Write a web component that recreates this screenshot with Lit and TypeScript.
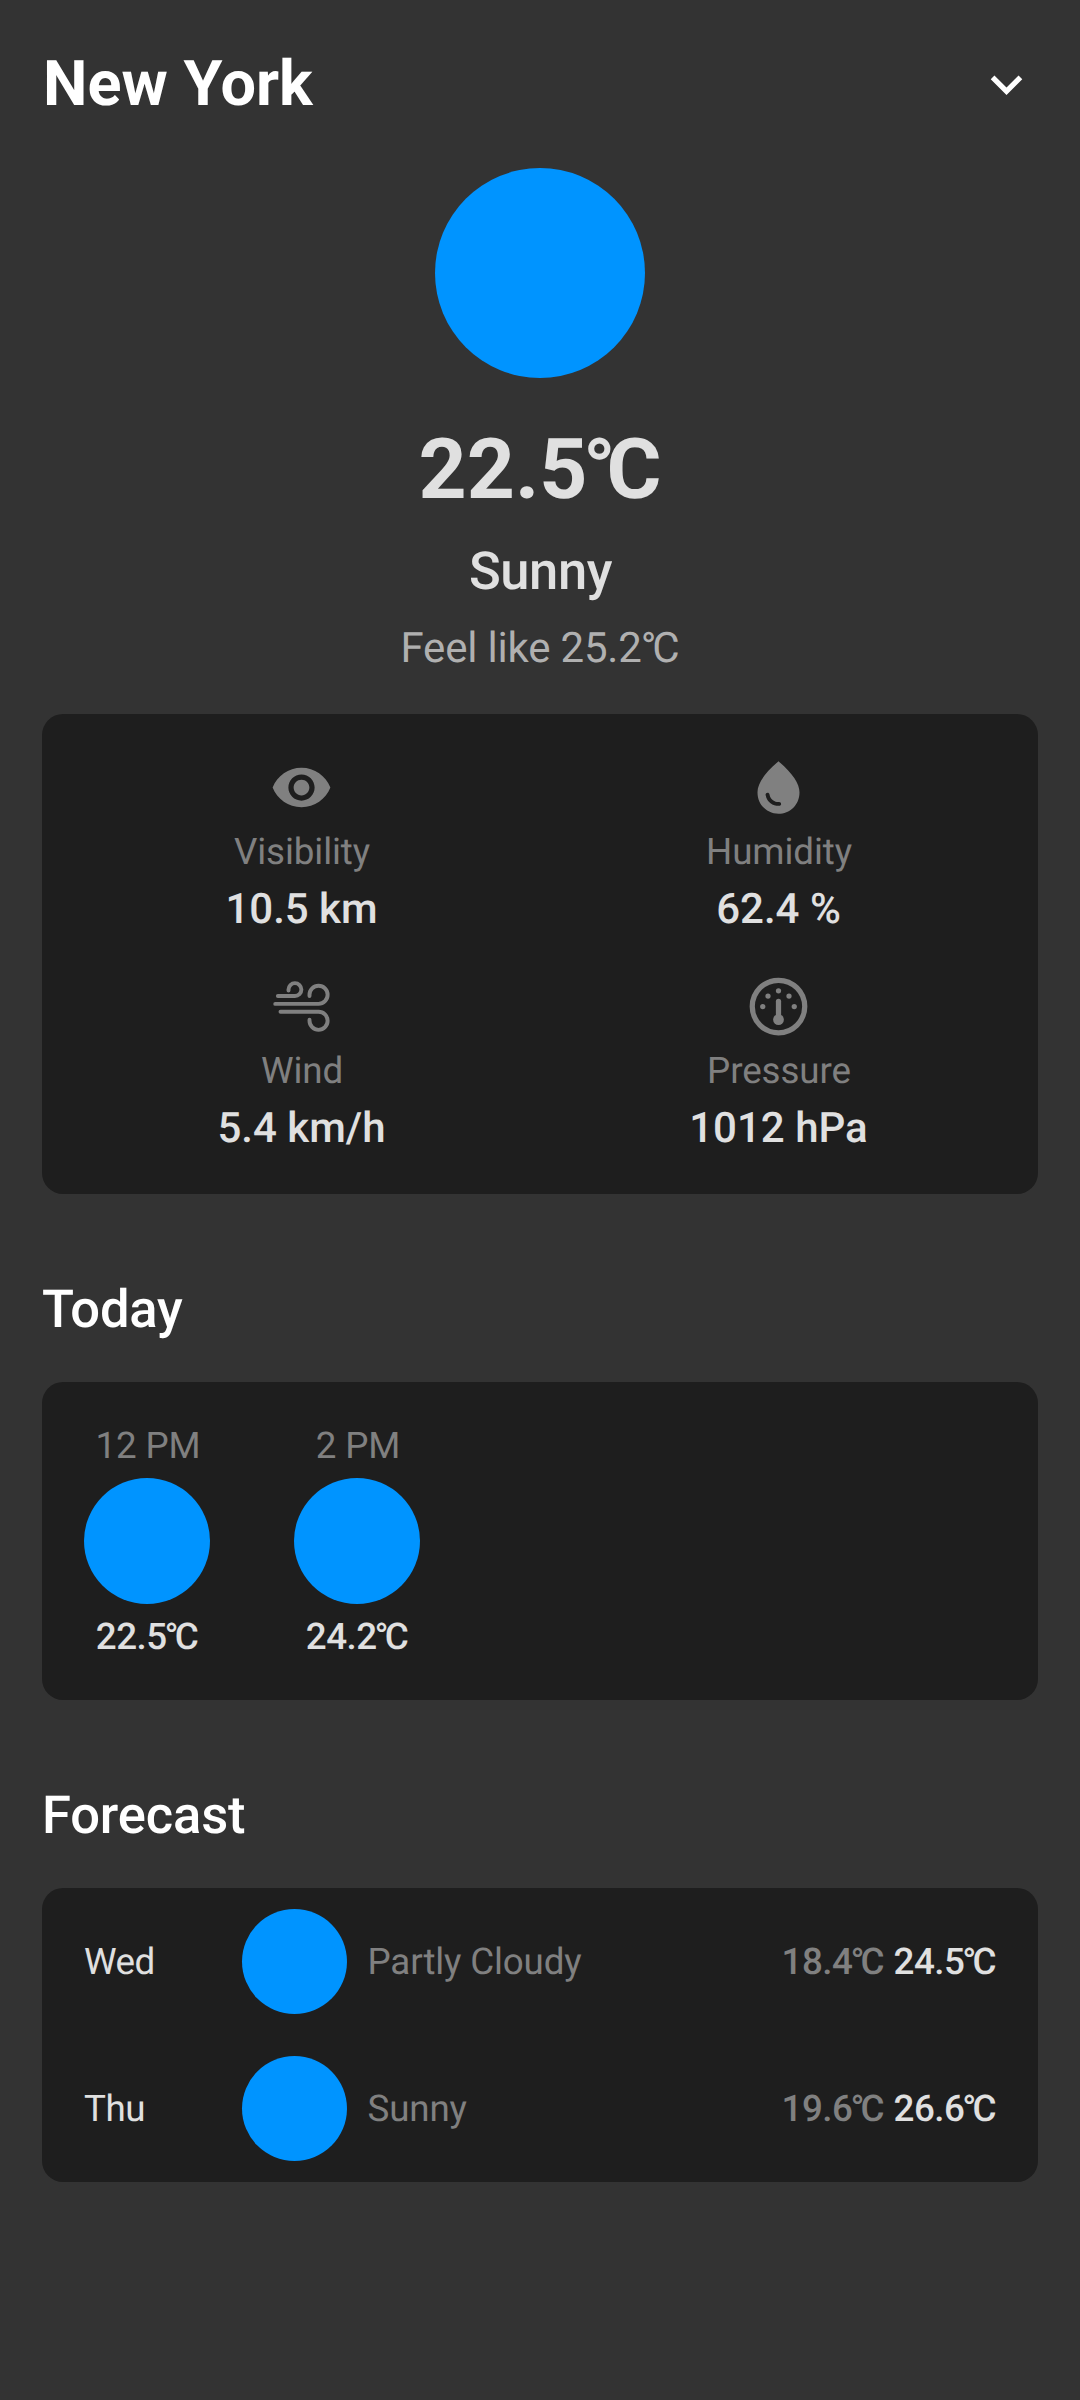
import { LitElement, html, css, svg, SVGTemplateResult } from "lit";
import { customElement, property, state } from "lit/decorators.js";

type IconName = "visibility" | "humidity" | "wind" | "pressure" | "chevron";

interface Metric {
  icon: IconName;
  label: string;
  value: string;
}

interface Hour {
  time: string;
  temp: string;
}

interface Day {
  name: string;
  condition: string;
  low: string;
  high: string;
}

const ICONS: Record<IconName, SVGTemplateResult> = {
  visibility: svg`<path fill="currentColor" d="M12 4.5C7 4.5 2.73 7.61 1 12c1.73 4.39 6 7.5 11 7.5s9.27-3.11 11-7.5c-1.73-4.39-6-7.5-11-7.5zM12 17c-2.76 0-5-2.24-5-5s2.24-5 5-5 5 2.24 5 5-2.24 5-5 5zm0-8c-1.66 0-3 1.34-3 3s1.34 3 3 3 3-1.34 3-3-1.34-3-3-3z"/>`,
  humidity: svg`<path fill="currentColor" fill-rule="evenodd" d="M12 2c-5.33 4.55-8 8.48-8 11.8 0 4.98 3.8 8.2 8 8.2s8-3.22 8-8.2C20 10.48 17.33 6.55 12 2zM7.83 14c.37 0 .67.26.74.62.41 2.22 2.28 2.98 3.64 2.87.43-.02.79.32.79.75 0 .4-.32.73-.72.75-2.13.13-4.62-1.09-5.19-4.12C7.01 14.42 7.37 14 7.83 14z"/>`,
  wind: svg`<g fill="none" stroke="currentColor" stroke-width="1.5" stroke-linecap="round">
    <path d="M3 8H9.5A2.45 2.45 0 1 0 7.05 5.55V5.9"/>
    <path d="M2 11H18.5A3.45 3.45 0 1 0 15.05 7.55V8"/>
    <path d="M4 14H18.5A3.45 3.45 0 1 1 15.05 17.45V17"/>
  </g>`,
  pressure: svg`<circle cx="12" cy="12" r="10" fill="none" stroke="currentColor" stroke-width="2"/>
    <g fill="currentColor">
      <circle cx="6" cy="12" r="1"/><circle cx="8" cy="8" r="1"/><circle cx="12" cy="6" r="1"/>
      <circle cx="16" cy="8" r="1"/><circle cx="18" cy="12" r="1"/><circle cx="12" cy="17" r="2.05"/>
      <rect x="11" y="9" width="2" height="8" rx="1"/>
    </g>`,
  chevron: svg`<path fill="currentColor" d="M7.41 8.59L12 13.17l4.59-4.58L18 10l-6 6-6-6z"/>`,
};

/* A temperature in Celsius; the degree sign is tucked between the last digit and the C. */
const celsius = (value: string) =>
  html`${value.slice(0, -1)}<span class="last">${value.slice(-1)}</span><span class="deg">°</span>C`;

@customElement("weather-icon")
export class WeatherIcon extends LitElement {
  static styles = css`
    :host { display: block; width: 63px; height: 63px; flex: none; }
    .glyph { display: block; width: 100%; height: 100%; }
  `;

  @property() name: IconName = "visibility";

  render() {
    return html`<svg class="glyph" viewBox="0 0 24 24" aria-hidden="true">${ICONS[this.name]}</svg>`;
  }
}

@customElement("app-root")
export class AppRoot extends LitElement {
  static styles = css`
    :host {
      display: block;
      box-sizing: border-box;
      min-height: 2400px;
      padding: 42px;
      background: #333333;
      color: #e0e0e0;
      font-family: Roboto, sans-serif;
      text-rendering: geometricPrecision;
    }
    h1, h2, p { margin: 0; }
    .header { display: flex; align-items: center; justify-content: space-between; height: 84px; color: #fff; }
    .city { padding: 2px 0 0 1px; font-size: 63px; line-height: 84px; font-weight: 700; }
    .disc { border-radius: 50%; background: #0094ff; flex: none; }
    .disc.large { width: 210px; height: 210px; }
    .disc.medium { width: 126px; height: 126px; }
    .disc.small { width: 105px; height: 105px; }
    .current { display: flex; flex-direction: column; align-items: center; padding-top: 42px; }
    .temp { margin-top: 43px; font-size: 84px; line-height: 98px; font-weight: 700; }
    .temp .last { letter-spacing: -0.053em; }
    .temp .deg { letter-spacing: -0.11em; }
    .condition { margin-top: 21px; padding-left: 1px; font-size: 52.5px; line-height: 62px; font-weight: 500; letter-spacing: -0.4px; }
    .feels { margin-top: 22px; font-size: 42px; line-height: 50px; letter-spacing: -0.2px; color: #b0b0b0; }
    .feels .last { letter-spacing: -0.023em; }
    .feels .deg { letter-spacing: -0.1em; }
    .card { border-radius: 21px; background: #1e1e1e; }
    .metrics {
      display: grid;
      grid-template-columns: 1fr 1fr;
      row-gap: 40px;
      margin-top: 40px;
      padding: 42px 21px 40px;
    }
    .metric { display: flex; flex-direction: column; align-items: center; gap: 11px; color: #808080; }
    .label { padding-left: 1px; font-size: 36.75px; line-height: 43px; letter-spacing: -0.1px; color: #808080; }
    .value { padding-top: 1px; font-size: 42px; line-height: 50px; font-weight: 500; color: #e0e0e0; }
    .section { margin: 84px 0 42px; font-size: 52.5px; line-height: 62px; font-weight: 500; letter-spacing: -0.15px; color: #fff; }
    .hours { display: flex; gap: 84px; padding: 42px; }
    .hour { display: flex; flex-direction: column; align-items: center; gap: 11px; width: 126px; }
    .hour .label { padding-left: 2px; }
    .small-temp { font-size: 36.75px; line-height: 43px; font-weight: 500; letter-spacing: -0.5px; white-space: nowrap; }
    .small-temp .last { letter-spacing: -2.6px; }
    .small-temp .deg { letter-spacing: -3.9px; }
    .day { display: flex; align-items: center; padding: 21px 42px; font-size: 36.75px; line-height: 43px; }
    .day-name { width: 158px; letter-spacing: -0.5px; }
    .day-condition { flex: 1; margin-left: 20.5px; letter-spacing: -0.15px; color: #808080; }
    .range { display: flex; gap: 9.5px; }
    .low { color: #808080; }
  `;

  @state() private metrics: Metric[] = [
    { icon: "visibility", label: "Visibility", value: "10.5 km" },
    { icon: "humidity", label: "Humidity", value: "62.4 %" },
    { icon: "wind", label: "Wind", value: "5.4 km/h" },
    { icon: "pressure", label: "Pressure", value: "1012 hPa" },
  ];

  @state() private hours: Hour[] = [
    { time: "12 PM", temp: "22.5" },
    { time: "2 PM", temp: "24.2" },
  ];

  @state() private days: Day[] = [
    { name: "Wed", condition: "Partly Cloudy", low: "18.4", high: "24.5" },
    { name: "Thu", condition: "Sunny", low: "19.6", high: "26.6" },
  ];

  render() {
    return html`
      <header class="header">
        <h1 class="city">New York</h1>
        <weather-icon name="chevron"></weather-icon>
      </header>
      <section class="current">
        <div class="disc large"></div>
        <p class="temp">${celsius("22.5")}</p>
        <p class="condition">Sunny</p>
        <p class="feels">Feel like ${celsius("25.2")}</p>
      </section>
      <section class="card metrics">
        ${this.metrics.map(
          (m) => html`<div class="metric">
            <weather-icon name=${m.icon}></weather-icon>
            <span class="label">${m.label}</span>
            <span class="value">${m.value}</span>
          </div>`
        )}
      </section>
      <h2 class="section">Today</h2>
      <section class="card hours">
        ${this.hours.map(
          (h) => html`<div class="hour">
            <span class="label">${h.time}</span>
            <div class="disc medium"></div>
            <span class="small-temp">${celsius(h.temp)}</span>
          </div>`
        )}
      </section>
      <h2 class="section">Forecast</h2>
      <section class="card">
        ${this.days.map(
          (d) => html`<div class="day">
            <span class="day-name">${d.name}</span>
            <div class="disc small"></div>
            <span class="day-condition">${d.condition}</span>
            <div class="range">
              <span class="small-temp low">${celsius(d.low)}</span>
              <span class="small-temp">${celsius(d.high)}</span>
            </div>
          </div>`
        )}
      </section>
    `;
  }
}
